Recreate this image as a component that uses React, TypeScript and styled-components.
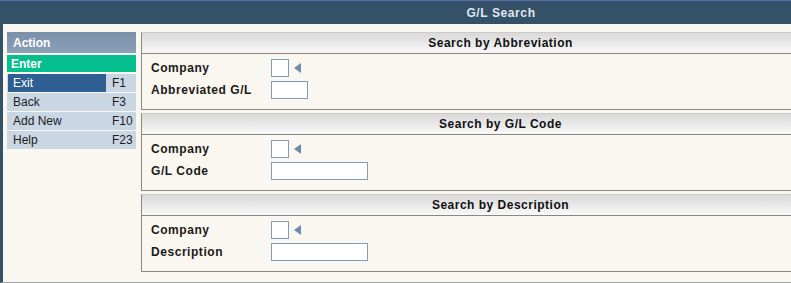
import React from "react";
import styled, { createGlobalStyle } from "styled-components";

const Global = createGlobalStyle`
  html, body { margin: 0; padding: 0; background: #faf6f0; overflow: hidden; }
  body { font-family: "Liberation Sans", Arial, sans-serif; font-size: 12px; }
`;

const Page = styled.div`
  width: 791px;
  height: 283px;
  display: flex;
  flex-direction: column;
  background: #faf6f0;
  overflow: hidden;
`;

const TopBar = styled.div`
  height: 23px;
  border-top: 1px solid #5a6fae;
  background: #345168;
  display: flex;
  align-items: center;
  justify-content: center;
  padding-left: 211px;
`;

const Title = styled.div`
  color: #dfe7ef;
  font-weight: bold;
  font-size: 12px;
  letter-spacing: 0.6px;
  padding-top: 1px;
`;

const Main = styled.div`
  flex: 1;
  display: flex;
  gap: 5px;
  border-left: 3px solid #345168;
  border-bottom: 1px solid #a3a3a3;
  padding: 8px 0 0 4px;
`;

const Sidebar = styled.div`
  width: 129px;
  flex-shrink: 0;
  display: flex;
  flex-direction: column;
`;

const ActionHead = styled.div`
  height: 21px;
  background: linear-gradient(#7990a9, #8ca1b8);
  color: #ffffff;
  font-weight: bold;
  display: flex;
  align-items: center;
  padding-left: 6px;
  margin-bottom: 2px;
`;

const EnterBar = styled.div`
  height: 17px;
  background: #04bf8d;
  color: #ffffff;
  font-weight: bold;
  display: flex;
  align-items: center;
  padding-left: 4px;
  margin-bottom: 2px;
`;

const MenuRow = styled.div`
  height: 18px;
  background: #c9d7e4;
  display: grid;
  grid-template-columns: 99px 30px;
  margin-bottom: 1px;
  color: #1c1c1c;
`;

const MenuLabel = styled.div<{ $active?: boolean }>`
  display: flex;
  align-items: center;
  padding-left: 5px;
  margin-left: 1px;
  background: ${(p) => (p.$active ? "#2f5e93" : "transparent")};
  color: ${(p) => (p.$active ? "#ffffff" : "#1c1c1c")};
`;

const MenuKey = styled.div`
  display: flex;
  align-items: center;
  padding-left: 6px;
`;

const Panel = styled.div`
  flex: 1;
  min-width: 0;
  display: flex;
  flex-direction: column;
  gap: 3px;
`;

const Section = styled.div`
  border-top: 1px solid #cfcbc6;
  border-left: 1px solid #8c8882;
  border-bottom: 1px solid #8c8882;
`;

const SectionHead = styled.div`
  height: 20px;
  background: linear-gradient(#d9d9d9, #f9f9f9);
  border-bottom: 1px solid #8a8782;
  display: flex;
  align-items: center;
  justify-content: center;
  padding-left: 68px;
  font-weight: bold;
  color: #111;
  letter-spacing: 0.5px;
`;

const SectionBody = styled.div`
  height: 55px;
  box-sizing: border-box;
  padding: 5px 0 0 9px;
  display: flex;
  flex-direction: column;
  gap: 4px;
`;

const Field = styled.div`
  display: grid;
  grid-template-columns: 120px auto;
  align-items: center;
  height: 18px;
`;

const Label = styled.div`
  font-weight: bold;
  color: #1a1a1a;
  letter-spacing: 0.55px;
`;

const Inputs = styled.div`
  display: flex;
  align-items: center;
  gap: 5px;
`;

const Box = styled.div<{ $w: number }>`
  width: ${(p) => p.$w}px;
  height: 18px;
  box-sizing: border-box;
  border: 1px solid #7f9db9;
  background: #ffffff;
`;

const Arrow = () => (
  <svg width="7" height="10" viewBox="0 0 7 10">
    <polygon points="7,0 7,10 0,5" fill="#6c8bab" />
  </svg>
);

type Row = { label: string; width: number; lookup?: boolean };

const sections: { title: string; rows: Row[] }[] = [
  {
    title: "Search by Abbreviation",
    rows: [
      { label: "Company", width: 18, lookup: true },
      { label: "Abbreviated G/L", width: 37 },
    ],
  },
  {
    title: "Search by G/L Code",
    rows: [
      { label: "Company", width: 18, lookup: true },
      { label: "G/L Code", width: 97 },
    ],
  },
  {
    title: "Search by Description",
    rows: [
      { label: "Company", width: 18, lookup: true },
      { label: "Description", width: 97 },
    ],
  },
];

const menu = [
  { label: "Exit", key: "F1", active: true },
  { label: "Back", key: "F3" },
  { label: "Add New", key: "F10" },
  { label: "Help", key: "F23" },
];

export default function App() {
  return (
    <Page>
      <Global />
      <TopBar>
        <Title>G/L Search</Title>
      </TopBar>
      <Main>
        <Sidebar>
          <ActionHead>Action</ActionHead>
          <EnterBar>Enter</EnterBar>
          {menu.map((m) => (
            <MenuRow key={m.label}>
              <MenuLabel $active={m.active}>{m.label}</MenuLabel>
              <MenuKey>{m.key}</MenuKey>
            </MenuRow>
          ))}
        </Sidebar>
        <Panel>
          {sections.map((s) => (
            <Section key={s.title}>
              <SectionHead>{s.title}</SectionHead>
              <SectionBody>
                {s.rows.map((r) => (
                  <Field key={r.label}>
                    <Label>{r.label}</Label>
                    <Inputs>
                      <Box $w={r.width} />
                      {r.lookup && <Arrow />}
                    </Inputs>
                  </Field>
                ))}
              </SectionBody>
            </Section>
          ))}
        </Panel>
      </Main>
    </Page>
  );
}
